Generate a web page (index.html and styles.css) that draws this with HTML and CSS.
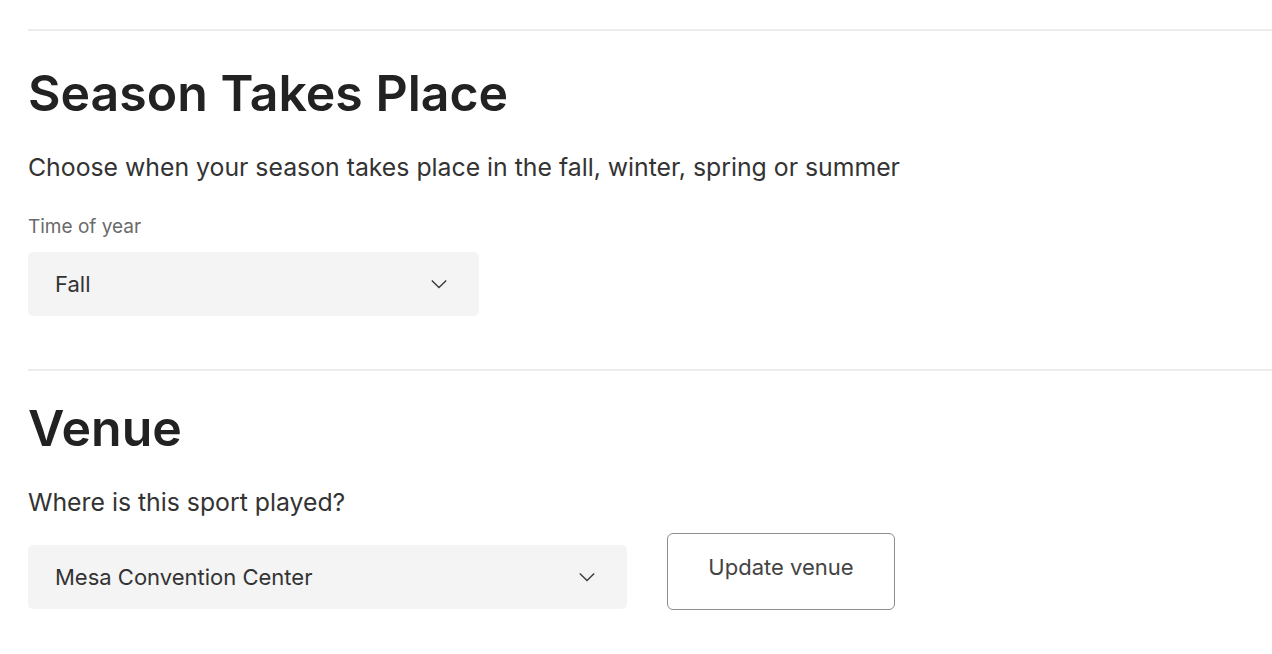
FILE: index.html
```html
<!DOCTYPE html>
<html>
<head>
<meta charset="utf-8">
<link rel="stylesheet" href="styles.css">
</head>
<body>
<div class="page">
  <section class="section">
    <h1 class="title">Season Takes Place</h1>
    <p class="desc">Choose when your season takes place in the fall, winter, spring or summer</p>
    <div class="label">Time of year</div>
    <div class="select select-season">
      <span class="select-value">Fall</span>
      <svg class="chevron" width="18" height="10" viewBox="0 0 18 10"><path d="M1.8 1.4 L9 8.4 L16.2 1.4" fill="none" stroke="#3a3a3a" stroke-width="1.4"/></svg>
    </div>
  </section>
  <section class="section section-venue">
    <h1 class="title">Venue</h1>
    <p class="desc">Where is this sport played?</p>
    <div class="venue-row">
      <div class="select select-venue">
        <span class="select-value">Mesa Convention Center</span>
        <svg class="chevron" width="18" height="10" viewBox="0 0 18 10"><path d="M1.8 1.4 L9 8.4 L16.2 1.4" fill="none" stroke="#3a3a3a" stroke-width="1.4"/></svg>
      </div>
      <button class="btn">Update venue</button>
    </div>
  </section>
</div>
</body>
</html>
```

FILE: styles.css
```css
html, body {
  margin: 0;
  padding: 0;
  background: #ffffff;
}
body {
  font-family: "Inter", "Noto Sans", sans-serif;
  color: #161616;
}
.page {
  padding-top: 29px;
  padding-left: 28px;
}
.section {
  border-top: 2px solid #ececec;
  padding-top: 30px;
  padding-bottom: 53px;
}
.section-venue {
  padding-top: 25px;
}
.title {
  margin: 0;
  font-size: 50px;
  font-weight: 600;
  line-height: 64px;
  letter-spacing: 0;
  color: #222222;
}
.desc {
  margin: 27px 0 0 0;
  font-size: 24.8px;
  line-height: 30px;
  color: #333333;
}
.label {
  margin-top: 33px;
  font-size: 19px;
  line-height: 24px;
  color: #6a6a6a;
}
.select {
  margin-top: 13px;
  height: 64px;
  background: #f4f4f4;
  border-radius: 5px;
  display: flex;
  align-items: center;
  justify-content: space-between;
  padding: 0 31px 0 27px;
  box-sizing: border-box;
}
.select-season {
  width: 451px;
}
.select-value {
  font-size: 22px;
  color: #333333;
}
.chevron {
  display: block;
}
.venue-row {
  display: flex;
  align-items: flex-start;
  gap: 40px;
  margin-top: 16px;
}
.select-venue {
  width: 599px;
  margin-top: 12px;
}
.btn {
  width: 228px;
  height: 77px;
  border: 1.5px solid #8d8d8d;
  border-radius: 6px;
  background: #fff;
  font-family: inherit;
  font-size: 22px;
  color: #444444;
  padding: 20px 0 0 0;
  display: flex;
  justify-content: center;
  align-items: flex-start;
  box-sizing: border-box;
}
```
